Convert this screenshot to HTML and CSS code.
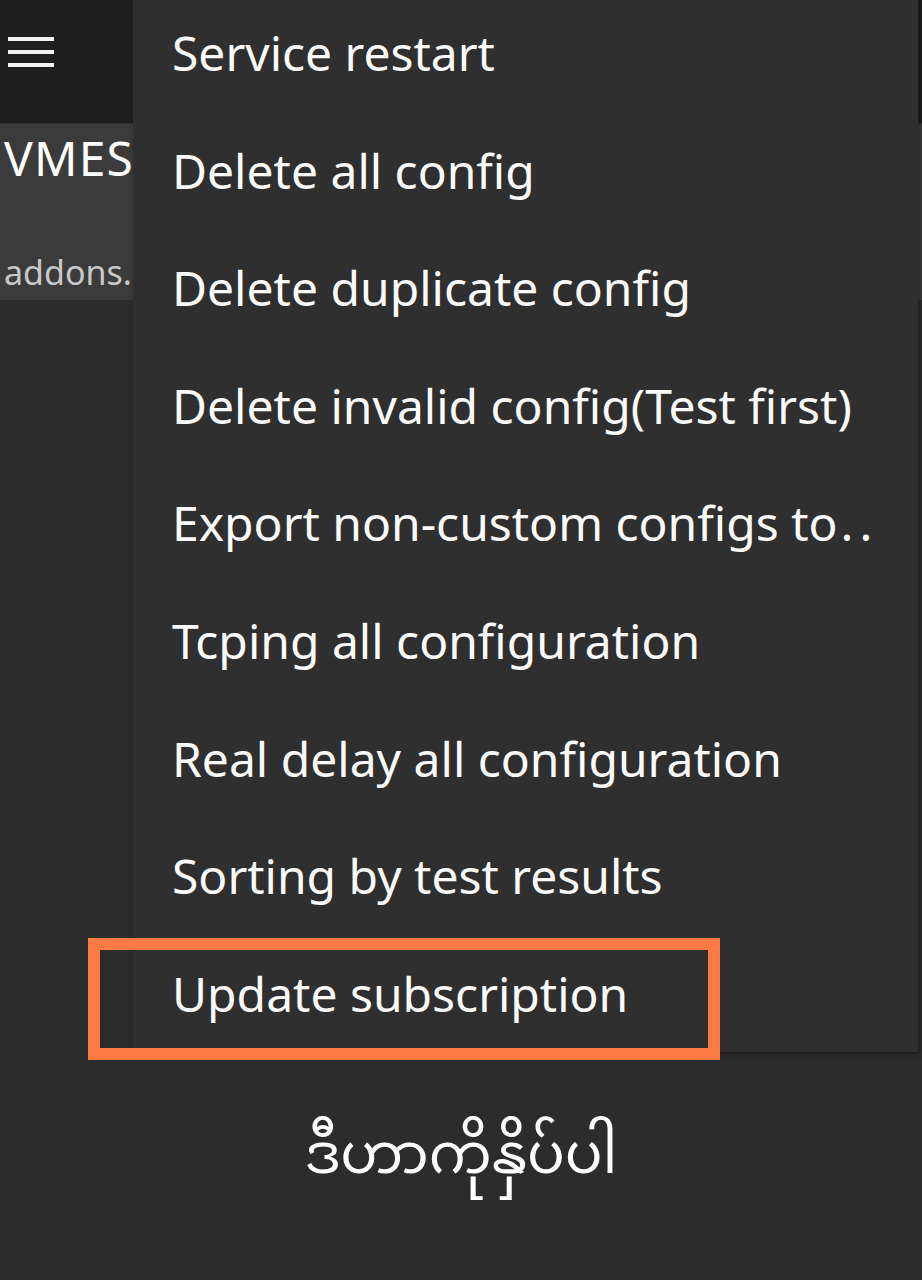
FILE: index.html
```html
<!DOCTYPE html>
<html>
<head>
<meta charset="utf-8">
<link rel="stylesheet" href="styles.css">
</head>
<body>
<div class="screen">
  <header class="appbar">
    <div class="hamburger"><span></span><span></span><span></span></div>
  </header>
  <div class="card">
    <div class="card-title">VMESS</div>
    <div class="card-sub">addons.</div>
  </div>

  <ul class="menu">
    <li>Service restart</li>
    <li>Delete all config</li>
    <li>Delete duplicate config</li>
    <li>Delete invalid config(Test first)</li>
    <li>Export non-custom configs to<span class="dots">..</span></li>
    <li>Tcping all configuration</li>
    <li>Real delay all configuration</li>
    <li>Sorting by test results</li>
    <li>Update subscription</li>
  </ul>

  <div class="highlight"></div>
  <div class="note">ဒီဟာကိုနှိပ်ပါ</div>
</div>
</body>
</html>
```

FILE: styles.css
```css
html, body {
  margin: 0;
  padding: 0;
}
body {
  background: #2c2c2c;
  font-family: "Noto Sans", "Liberation Sans", sans-serif;
  color: #fff;
}
.screen {
  position: relative;
  width: 922px;
  height: 1280px;
  overflow: hidden;
  background: #2c2c2c;
}
.appbar {
  height: 123px;
  background: #1f1f1f;
  display: flex;
  align-items: flex-start;
}
.hamburger {
  display: flex;
  flex-direction: column;
  gap: 9px;
  padding: 37px 0 0 8px;
}
.hamburger span {
  display: block;
  width: 46px;
  height: 4px;
  background: #f2f2f2;
}
.card {
  height: 176px;
  margin-top: 1px;
  background: #3b3b3b;
  padding-left: 4px;
  box-sizing: border-box;
  white-space: nowrap;
}
.card-title {
  font-size: 48px;
  line-height: 48px;
  padding-top: 10px;
  letter-spacing: 1.2px;
  color: #fff;
}
.card-sub {
  font-size: 34px;
  line-height: 40px;
  margin-top: 70px;
  color: #c8c8c8;
}
.menu {
  position: absolute;
  left: 133px;
  top: -6px;
  width: 785px;
  margin: 0;
  padding: 0;
  list-style: none;
  background: #2f2f2f;
  box-shadow: 2px 3px 6px rgba(0,0,0,0.35);
}
.menu li {
  height: 117.6px;
  line-height: 117.6px;
  padding-left: 39px;
  font-size: 48px;
  color: #fafafa;
  white-space: nowrap;
}
.dots {
  letter-spacing: 6px;
  padding-left: 3px;
}
.highlight {
  position: absolute;
  left: 88px;
  top: 938px;
  width: 632px;
  height: 122px;
  box-sizing: border-box;
  border: 12px solid #fd7a45;
}
.note {
  position: absolute;
  left: 0;
  right: 0;
  top: 1112px;
  text-align: center;
  font-family: "Noto Sans Myanmar", "Padauk", "Myanmar Text", sans-serif;
  font-size: 56px;
  line-height: 96px;
  color: #fff;
}
```
